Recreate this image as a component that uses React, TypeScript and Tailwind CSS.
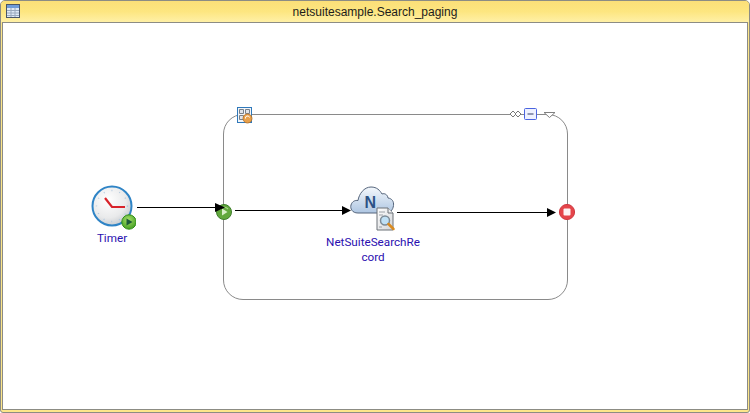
import React from 'react';

const labelClass =
  "text-center text-[11.7px] text-[#2a10b0] font-['Roboto','Liberation_Sans',sans-serif]";

const TableIcon: React.FC = () => (
  <svg width="15" height="15" viewBox="0 0 15 15" className="shrink-0">
    <rect x="0.5" y="0.5" width="13" height="13" fill="#dfe9f6" stroke="#4a5668" />
    <rect x="1" y="1" width="12" height="3" fill="#6f9bd8" />
    <path d="M1 6.5H13M1 9H13M1 11.5H13M5 4V13M9 4V13" stroke="#9aa9bd" strokeWidth="1" fill="none" />
  </svg>
);

const ClockIcon: React.FC = () => (
  <svg width="48" height="46" viewBox="0 0 48 46" className="shrink-0">
    <defs>
      <radialGradient id="face" cx="40%" cy="35%" r="70%">
        <stop offset="0%" stopColor="#ffffff" />
        <stop offset="65%" stopColor="#e9eaeb" />
        <stop offset="100%" stopColor="#c4c8cd" />
      </radialGradient>
      <radialGradient id="greenBadge" cx="45%" cy="35%" r="70%">
        <stop offset="0%" stopColor="#a6e06a" />
        <stop offset="100%" stopColor="#3f9a1e" />
      </radialGradient>
    </defs>
    <circle cx="24" cy="22" r="19.5" fill="url(#face)" stroke="#2f84c6" strokeWidth="2" />
    <circle cx="24" cy="22" r="15.5" fill="none" stroke="#b5cbe0" strokeWidth="1.4" strokeDasharray="1 7" />
    <path d="M17 14L24 23L37 23" fill="none" stroke="#d8232a" strokeWidth="2.2" strokeLinejoin="miter" />
    <circle cx="41" cy="38" r="7.2" fill="url(#greenBadge)" stroke="#2f8f18" strokeWidth="1" />
    <path d="M38.5 34.5V41.5L44.5 38Z" fill="#1d5a3a" />
  </svg>
);

const StartIcon: React.FC = () => (
  <svg width="18" height="18" viewBox="0 0 18 18" className="absolute left-[215px] top-[203px]">
    <circle cx="9" cy="9" r="7.5" fill="#62a83c" stroke="#3f7f2b" strokeWidth="1" />
    <path d="M5 6.5A5 5 0 0 1 13 6" fill="none" stroke="#a9d68a" strokeWidth="1.2" />
    <path d="M7 5.5L12.5 9L7 12.5Z" fill="#d9efc8" />
  </svg>
);

const StopIcon: React.FC = () => (
  <svg width="18" height="18" viewBox="0 0 18 18" className="absolute left-[558px] top-[203px]">
    <circle cx="9" cy="9" r="7.6" fill="#e5454a" stroke="#cf3a42" strokeWidth="1" />
    <rect x="5.5" y="5.5" width="7" height="7" rx="1" fill="#fdf3f3" />
  </svg>
);

const NetSuiteIcon: React.FC = () => (
  <svg width="50" height="50" viewBox="-1 0 50 50" className="shrink-0">
    <defs>
      <linearGradient id="cloud" x1="0" y1="0" x2="0" y2="1">
        <stop offset="0%" stopColor="#f4f8fc" />
        <stop offset="100%" stopColor="#aec6e2" />
      </linearGradient>
      <linearGradient id="page" x1="0" y1="0" x2="1" y2="1">
        <stop offset="0%" stopColor="#ffffff" />
        <stop offset="100%" stopColor="#d3d5d8" />
      </linearGradient>
    </defs>
    <path
      d="M9 28C3 28 1 23.5 2 20C3 16.5 6 15 9 15.500C10 9 15 2 22 2C28 2 31 5.500 33 9C35.500 8 38.500 9.500 39 13C43 13.500 45 16.500 44.500 20.500C44 25 41 28 37 28Z"
      fill="url(#cloud)"
      stroke="#55657c"
      strokeWidth="1"
    />
    <text x="15.500" y="23" fontFamily="'Liberation Sans', sans-serif" fontSize="16" fontWeight="700" fill="#2c5286">
      N
    </text>
    <path d="M28 23H39L44 28V45H28Z" fill="url(#page)" stroke="#6d7278" strokeWidth="1" />
    <path d="M39 23V28H44" fill="#eceef0" stroke="#6d7278" strokeWidth="1" />
    <path d="M30 27H36M30 30H34M30 42H33" stroke="#9aa0a6" strokeWidth="1" />
    <circle cx="36" cy="35.500" r="4.500" fill="#bfe0f5" stroke="#7c8a96" strokeWidth="1.500" />
    <path d="M39.500 39L44.500 44" stroke="#d98a1f" strokeWidth="2.500" strokeLinecap="round" />
  </svg>
);

const GroupBadge: React.FC = () => (
  <svg width="16" height="17" viewBox="0 0 16 17" className="absolute left-[237px] top-[107px]">
    <rect x="0.500" y="0.500" width="14" height="15" fill="#f2f5f8" stroke="#2f78ba" />
    <path d="M2.500 2.500H6.500V6.500H2.500ZM8.500 2.500H12.500V6.500H8.500ZM2.500 8.500H6.500V12.500H2.500Z" fill="#dfe3e8" stroke="#77808a" />
    <circle cx="10.500" cy="11.500" r="4.500" fill="#e8a04a" stroke="#b66f22" strokeWidth="0.800" />
    <path d="M8.500 11.500A2 2 0 0 1 12.500 10.500" fill="none" stroke="#fff" strokeWidth="1" />
  </svg>
);

const GroupControls: React.FC = () => (
  <svg width="52" height="14" viewBox="0 0 52 14" className="absolute left-[508px] top-[107px]">
    <path d="M2 7L5 4L8 7L5 10ZM7 7L10 4L13 7L10 10Z" fill="#fff" stroke="#777" strokeWidth="1" />
    <rect x="16.500" y="1.500" width="12" height="11" rx="1" fill="#eef1ff" stroke="#4a64e0" strokeWidth="1" />
    <path d="M19.500 7H25.500" stroke="#303a66" strokeWidth="1" />
    <path d="M36 5.500H47L41.500 10.500Z" fill="#fff" stroke="#808080" strokeWidth="1" />
  </svg>
);

const Connectors: React.FC = () => (
  <svg width="750" height="413" viewBox="0 0 750 413" className="absolute left-0 top-0">
    <path d="M137 207.500H217" stroke="#000" strokeWidth="1" />
    <path d="M235 210.500H344" stroke="#000" strokeWidth="1" />
    <path d="M397 212.500H549" stroke="#000" strokeWidth="1" />
    <path d="M215 203L225 207.500L215 212Z" fill="#000" />
    <path d="M342 206L351 210.500L342 215Z" fill="#000" />
    <path d="M547 208L556 212.500L547 217Z" fill="#000" />
  </svg>
);

const App: React.FC = () => {
  return (
    <div className="w-[750px] h-[413px] overflow-hidden bg-white">
      <div className="flex flex-col w-full h-full bg-[#fde68a] border border-[#8c8c84] rounded-t-[5px] rounded-b-[3px]">
        {/* Title bar */}
        <div className="flex items-center h-[21px] shrink-0 px-[5px] rounded-t-[4px] bg-gradient-to-b from-[#fbdf78] via-[#fde680] to-[#fff0a6]">
          <TableIcon />
          <span className="flex-1 text-center font-['Liberation_Sans',sans-serif] text-[12px] leading-none text-[#1c1c1c]">
            netsuitesample.Search_paging
          </span>
          <div className="w-[15px] shrink-0" />
        </div>

        {/* Editor canvas, children use page coordinates */}
        <div className="flex-1 mx-px mb-[2px] border border-[#8c8c84] bg-white overflow-hidden">
          <div className="relative -left-[3px] -top-[23px] w-[750px] h-[413px]">
            <div className="absolute left-[223px] top-[114px] w-[345px] h-[186px] rounded-[20px] border border-[#8a8a8a]" />
            <GroupBadge />
            <GroupControls />
            <StartIcon />
            <StopIcon />
            <Connectors />

            <div className="absolute left-[82px] top-[184px] w-[60px] flex flex-col items-center">
              <ClockIcon />
              <span className={`${labelClass} leading-4`}>Timer</span>
            </div>

            <div className="absolute left-[318px] top-[185px] w-[110px] flex flex-col items-center">
              <NetSuiteIcon />
              <span className={`${labelClass} leading-[15px]`}>
                NetSuiteSearchRe
                <br />
                cord
              </span>
            </div>
          </div>
        </div>
      </div>
    </div>
  );
};

export default App;
